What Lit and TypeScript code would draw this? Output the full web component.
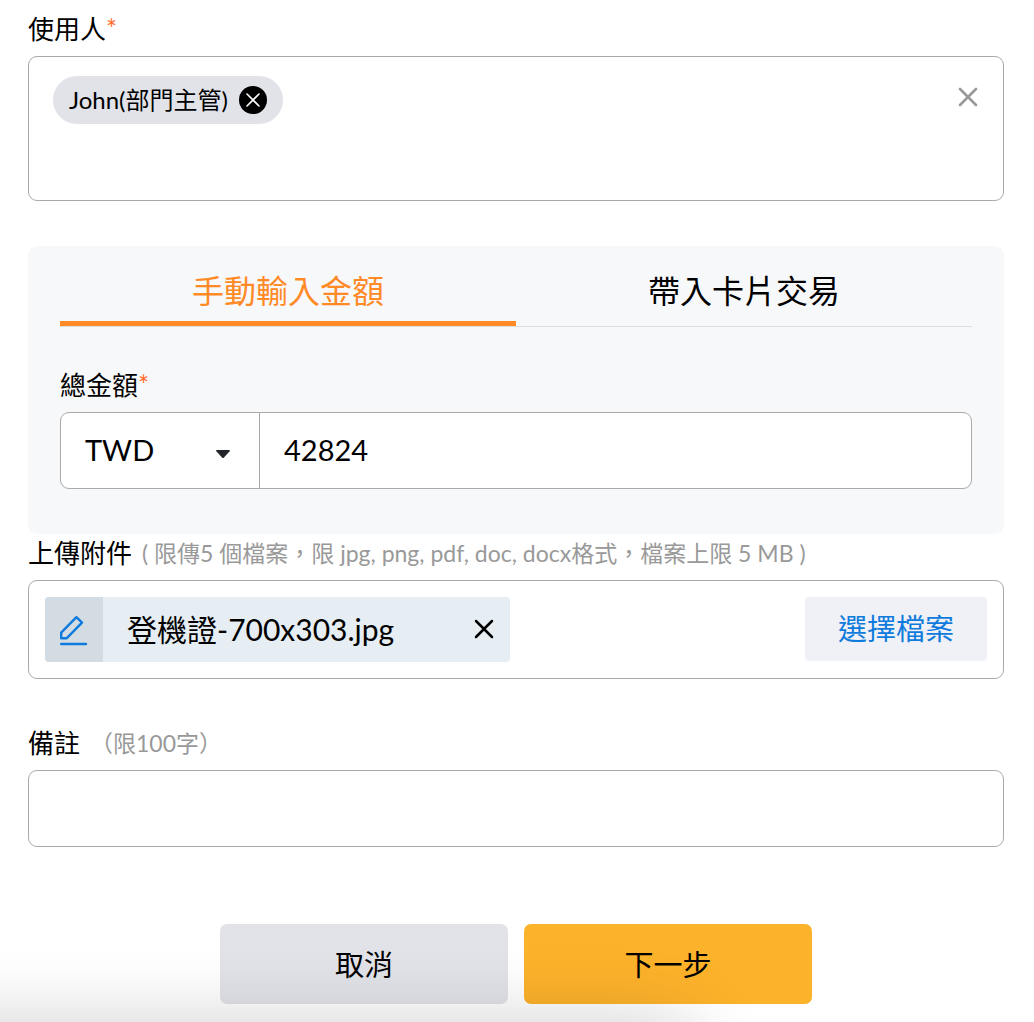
import { LitElement, html, css, svg } from "lit";
import { customElement, state } from "lit/decorators.js";

const cross = svg`<path d="M2 2 L18 18 M18 2 L2 18" fill="none" stroke="currentColor" stroke-linecap="round" />`;

@customElement("app-root")
export class AppRoot extends LitElement {
  @state() private mode: "manual" | "card" = "manual";

  static styles = css`
    :host {
      display: block;
      position: relative;
      box-sizing: border-box;
      min-height: 100vh;
      overflow: hidden;
      padding: 13px 30px 18px 28px;
      background: #fff;
      color: #000;
      font-family: Lato, "Noto Sans CJK TC", sans-serif;
      font-size: 26px;
      line-height: 32px;
    }
    * {
      box-sizing: border-box;
    }
    button,
    input,
    select {
      margin: 0;
      padding: 0;
      border: 0;
      background: none;
      color: inherit;
      font: inherit;
    }
    button {
      cursor: pointer;
    }
    svg {
      display: block;
    }
    .form {
      display: flex;
      flex-direction: column;
    }
    .label {
      display: flex;
      align-items: center;
      margin-bottom: 11px;
    }
    .required {
      color: #ff6b2c;
    }
    .hint {
      margin-left: 10px;
      color: #999;
      font-size: 23px;
    }
    .box {
      display: flex;
      align-items: flex-start;
      justify-content: space-between;
      width: 100%;
      border: 1px solid #aaa;
      border-radius: 9px;
      background: #fff;
    }
    .users {
      min-height: 145px;
      padding: 19px 24px;
      margin-bottom: 45px;
    }
    .chip {
      display: flex;
      align-items: center;
      gap: 11px;
      height: 48px;
      padding: 0 16px;
      border-radius: 24px;
      background: #e2e3e9;
      font-size: 24px;
    }
    .chip-remove {
      width: 28px;
      height: 28px;
    }
    .clear {
      padding: 11px 0;
      color: #999;
    }
    .panel {
      padding: 0 32px 45px;
      border-radius: 9px;
      background: #f7f8fa;
    }
    .tabs {
      display: flex;
      margin-bottom: 42px;
      border-bottom: 1px solid #dcdddf;
    }
    .tab {
      flex: 1;
      height: 80px;
      padding: 14px 0 0;
      border-bottom: 5px solid transparent;
      font-size: 32px;
    }
    .tab.active {
      border-bottom-color: #ff8a26;
      color: #ff8a26;
    }
    .amount {
      height: 77px;
      align-items: stretch;
      font-size: 29px;
    }
    .currency {
      display: grid;
      width: 199px;
      border-right: 1px solid #aaa;
    }
    .currency select {
      grid-area: 1 / 1;
      appearance: none;
      padding: 0 24px 2px;
      border-radius: 9px 0 0 9px;
    }
    .caret {
      grid-area: 1 / 1;
      place-self: center end;
      margin: 6px 28px 0 0;
      pointer-events: none;
    }
    .amount input {
      flex: 1;
      min-width: 0;
      padding: 0 24px 2px;
      border-radius: 0 9px 9px 0;
    }
    .upload-label {
      margin-top: 3px;
    }
    .files {
      padding: 16px;
      margin-bottom: 48px;
      font-size: 29px;
    }
    .file {
      display: flex;
      align-items: center;
      width: 465px;
      height: 65px;
      border-radius: 4px;
      overflow: hidden;
      background: #e6eef4;
      font-size: 30px;
    }
    .edit {
      display: grid;
      place-items: center;
      width: 58px;
      height: 100%;
      background: #d3dbe3;
      color: #0f7bdc;
    }
    .file-name {
      flex: 1;
      padding: 0 0 2px 24px;
    }
    .file-remove {
      padding: 0 16px 2px;
    }
    .choose {
      height: 64px;
      padding: 0 33px;
      border-radius: 4px;
      background: #f0f1f7;
      color: #0f7bdc;
    }
    .note {
      height: 77px;
      padding: 0 24px;
      margin-bottom: 77px;
      font-size: 29px;
    }
    .actions {
      display: flex;
      justify-content: center;
      gap: 16px;
    }
    .action {
      width: 288px;
      height: 80px;
      padding-top: 2px;
      border-radius: 7px;
      background: #e2e3e9;
      font-size: 29px;
    }
    .action.primary {
      background: #fdb22b;
    }
    .shade {
      position: absolute;
      top: 100%;
      left: -120px;
      right: 336px;
      height: 200px;
      border-radius: 40px;
      box-shadow: 0 0 75px rgba(0, 0, 0, 0.19);
      pointer-events: none;
    }
  `;

  private tab(id: "manual" | "card", text: string) {
    const on = this.mode === id;
    return html`<button
      type="button"
      role="tab"
      aria-selected=${on}
      class="tab ${on ? "active" : ""}"
      @click=${() => (this.mode = id)}
    >${text}</button>`;
  }

  render() {
    return html`
      <form class="form" @submit=${(e: Event) => e.preventDefault()}>
        <div class="label" id="users">使用人<span class="required">*</span></div>
        <div class="box users" role="group" aria-labelledby="users">
          <div class="chip">
            <span>John(部門主管)</span>
            <button type="button" class="chip-remove" aria-label="移除">
              <svg width="28" height="28" viewBox="0 0 28 28">
                <circle cx="14" cy="14" r="14" fill="#000" />
                <path d="M8 8 L20 20 M20 8 L8 20" fill="none" stroke="#fff" stroke-width="1.6" stroke-linecap="round" />
              </svg>
            </button>
          </div>
          <button type="button" class="clear" aria-label="清除">
            <svg width="22" height="20" viewBox="-1 0 22 20" stroke-width="2.6">${cross}</svg>
          </button>
        </div>

        <section class="panel">
          <div class="tabs" role="tablist">
            ${this.tab("manual", "手動輸入金額")} ${this.tab("card", "帶入卡片交易")}
          </div>
          <label class="label" for="amount">總金額<span class="required">*</span></label>
          <div class="box amount">
            <div class="currency">
              <select aria-label="幣別">
                <option>TWD</option>
              </select>
              <svg class="caret" width="16" height="10" viewBox="0 0 16 10">
                <path d="M2 1 H14 Q15.500 1 14.600 2.300 L9 8.400 Q8 9.400 7 8.400 L1.400 2.300 Q.5 1 2 1Z" fill="#212529" />
              </svg>
            </div>
            <input id="amount" type="text" inputmode="numeric" value="42824" />
          </div>
        </section>

        <div class="label upload-label" id="files">
          上傳附件<span class="hint">( 限傳5 個檔案，限 jpg, png, pdf, doc, docx格式，檔案上限 5 MB )</span>
        </div>
        <div class="box files" role="group" aria-labelledby="files">
          <div class="file">
            <button type="button" class="edit" aria-label="編輯">
              <svg width="30" height="32" viewBox="0 0 30 32" fill="none" stroke="currentColor" stroke-width="2.4">
                <path d="M2.200 24.200 V18.600 L17.400 3.200 L23 8.700 L7.800 24.200 Z" stroke-linejoin="round" />
                <path d="M2.200 30 H27" stroke-linecap="round" />
              </svg>
            </button>
            <span class="file-name">登機證-700x303.jpg</span>
            <button type="button" class="file-remove" aria-label="移除檔案">
              <svg width="20" height="20" viewBox="0 0 20 20" stroke-width="2.5">${cross}</svg>
            </button>
          </div>
          <button type="button" class="choose">選擇檔案</button>
        </div>

        <label class="label" for="note">備註<span class="hint">（限100字）</span></label>
        <input class="box note" id="note" type="text" maxlength="100" />

        <div class="actions">
          <button type="button" class="action">取消</button>
          <button type="submit" class="action primary">下一步</button>
        </div>
      </form>
      <div class="shade"></div>
    `;
  }
}
